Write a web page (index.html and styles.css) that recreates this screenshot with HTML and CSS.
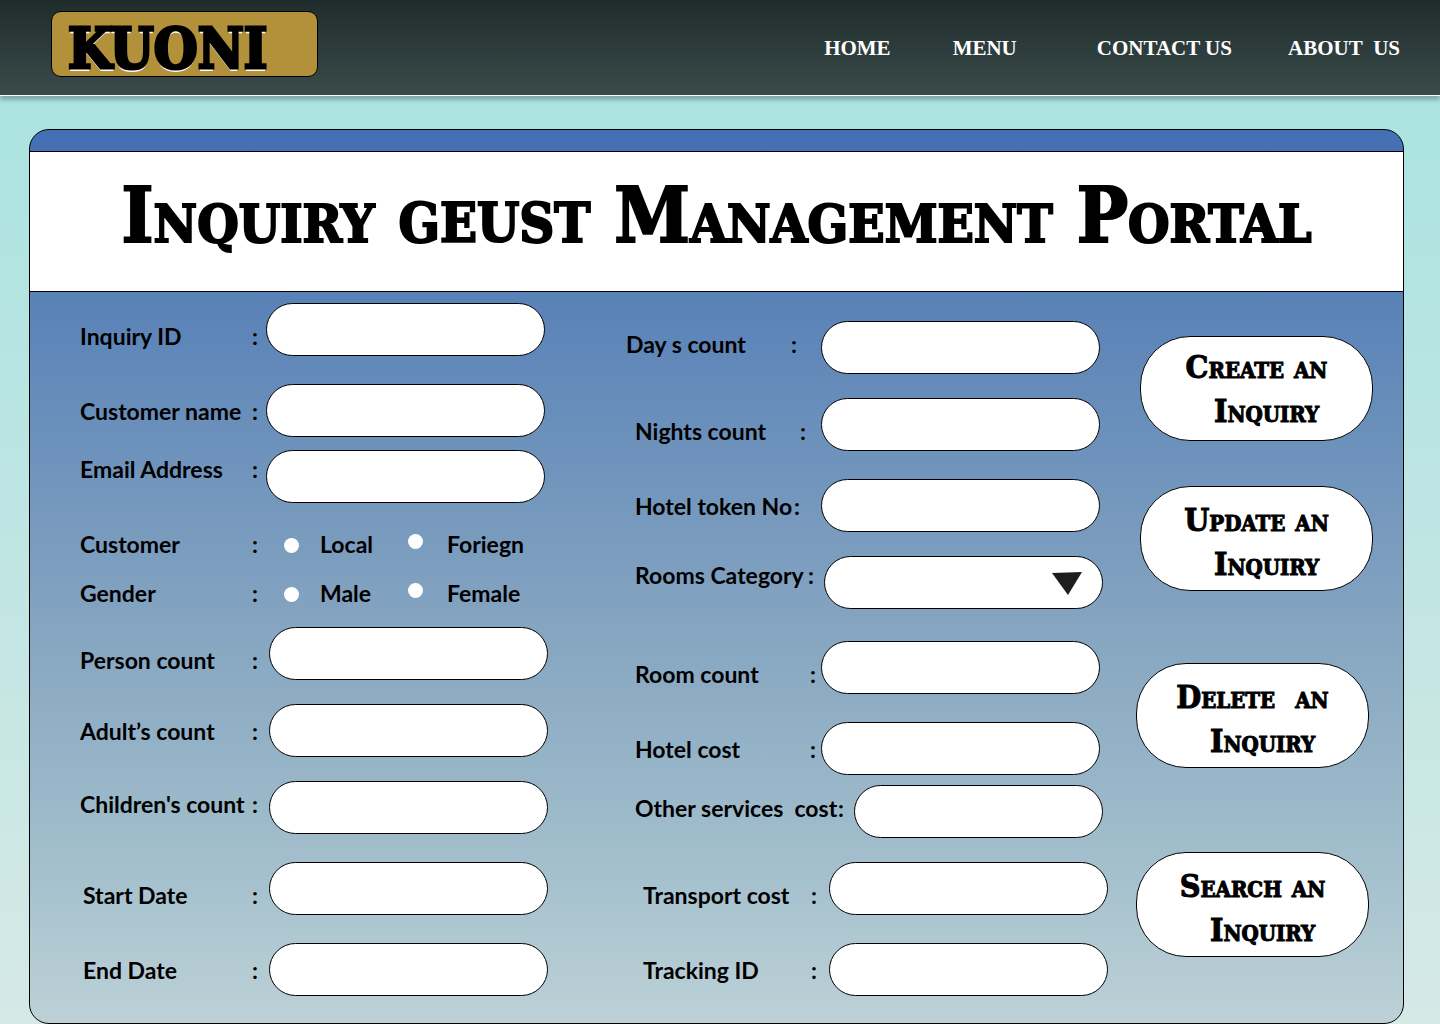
FILE: index.html
```html
<!DOCTYPE html>
<html lang="en">
<head>
<meta charset="utf-8">
<meta name="viewport" content="width=device-width, initial-scale=1">
<title>Kuoni - Inquiry Guest Management Portal</title>
<link rel="stylesheet" href="styles.css">
</head>
<body>
<header class="site-header">
  <a class="brand" href="#">KUONI</a>
  <nav class="nav">
    <a href="#">HOME</a>
    <a href="#" class="nav-menu">MENU</a>
    <a href="#" class="nav-contact">CONTACT US</a>
    <a href="#" class="nav-about">ABOUT&nbsp; US</a>
  </nav>
</header>
<main class="panel">
  <div class="title-band">
    <h1>Inquiry <span class="caps">GEUST</span> Management Portal</h1>
  </div>
  <form class="form">
    <div class="column first">
      <div class="row"><label class="low" for="inquiry-id">Inquiry ID<span>:</span></label><input class="field" id="inquiry-id" type="text"></div>
      <div class="row space-l"><label for="customer-name">Customer name<span>:</span></label><input class="field" id="customer-name" type="text"></div>
      <div class="row space-s"><label class="high" for="email">Email Address<span>:</span></label><input class="field" id="email" type="email"></div>
      <div class="choices" role="radiogroup" aria-labelledby="customer-type">
        <div class="name" id="customer-type">Customer<span>:</span></div>
        <label class="choice"><input type="radio" name="type">Local</label>
        <label class="choice raised"><input type="radio" name="type">Foriegn</label>
      </div>
      <div class="choices" role="radiogroup" aria-labelledby="gender">
        <div class="name" id="gender">Gender<span>:</span></div>
        <label class="choice"><input type="radio" name="gender">Male</label>
        <label class="choice raised"><input type="radio" name="gender">Female</label>
      </div>
      <div class="row wide space-xs"><label class="low" for="persons">Person count<span>:</span></label><input class="field" id="persons" type="text"></div>
      <div class="row wide space-m"><label for="adults">Adult’s count<span>:</span></label><input class="field" id="adults" type="text"></div>
      <div class="row wide space-m"><label class="upper" for="children">Children's count<span>:</span></label><input class="field" id="children" type="text"></div>
      <div class="row wide dates space-l"><label class="low" for="start">Start Date<span>:</span></label><input class="field" id="start" type="text"></div>
      <div class="row wide dates space-l"><label for="end">End Date<span>:</span></label><input class="field" id="end" type="text"></div>
    </div>
    <div class="column second">
      <div class="row outdent"><label class="upper" for="days">Day s count<span>:</span></label><input class="field" id="days" type="text"></div>
      <div class="row space-m"><label class="low" for="nights">Nights count<span>:</span></label><input class="field" id="nights" type="text"></div>
      <div class="row token space-l"><label for="token">Hotel token No<span>:</span></label><input class="field" id="token" type="text"></div>
      <div class="row category space-m"><label class="high" for="category">Rooms Category<span>:</span></label>
        <div class="select field">
          <select id="category"><option></option></select>
          <svg viewBox="0 0 30 23" width="30" height="23" aria-hidden="true"><path d="M0 1L30 0L16 23Z" fill="#1e1e1e"/></svg>
        </div>
      </div>
      <div class="row full space-xl"><label class="low" for="rooms">Room count<span>:</span></label><input class="field" id="rooms" type="text"></div>
      <div class="row full space-l"><label for="hotel-cost">Hotel cost<span>:</span></label><input class="field" id="hotel-cost" type="text"></div>
      <div class="row services space-xs"><label class="upper" for="services">Other services&nbsp; cost<span>:</span></label><input class="field" id="services" type="text"></div>
      <div class="row indent space-m"><label class="low" for="transport">Transport cost<span>:</span></label><input class="field" id="transport" type="text"></div>
      <div class="row indent space-l"><label for="tracking">Tracking ID<span>:</span></label><input class="field" id="tracking" type="text"></div>
    </div>
    <div class="actions">
      <div class="pair top">
        <button type="button">Create an
  Inquiry</button>
        <button type="button" class="drop">Update an
  Inquiry</button>
      </div>
      <div class="pair bottom">
        <button type="button" class="drop">Delete  an
  Inquiry</button>
        <button type="button" class="drop">Search an
  Inquiry</button>
      </div>
    </div>
  </form>
</main>
</body>
</html>
```
FILE: styles.css
```css
* {
  box-sizing: border-box;
}

body {
  margin: 0;
  min-height: 100vh;
  color: #000;
  font-family: Lato, sans-serif;
  background: linear-gradient(#a9e2e0, #abe3e1 10%, #c5e6e4 65%, #d5e9e7);
}

.site-header {
  display: flex;
  align-items: center;
  justify-content: space-between;
  height: 96px;
  padding: 0 40px 8px 51px;
  border-bottom: 1px solid #fff;
  background: linear-gradient(#1f2c2c, #3a4b4a);
  box-shadow: 0 4px 4px rgba(0, 0, 0, 0.25);
}

.brand {
  width: 267px;
  height: 66px;
  padding-left: 16px;
  border: 1px solid #000;
  border-radius: 10px;
  background: #b2913a;
  color: #000;
  font: bold 56px/72px "DejaVu Serif Condensed", "DejaVu Serif", serif;
  -webkit-text-stroke: 3px #000;
  text-decoration: none;
  text-shadow: 0 3px 0 #fff;
}

.nav {
  display: flex;
  padding-top: 8px;
}

.nav a {
  color: #fff;
  font: bold 21px/32px "Liberation Serif", serif;
  text-decoration: none;
}

.nav-menu {
  margin-left: 62px;
}

.nav-contact {
  margin-left: 80px;
}

.nav-about {
  margin-left: 56px;
}

.panel {
  margin: 33px 36px 0 29px;
  border: 1px solid #000;
  border-radius: 20px;
  background: linear-gradient(#436fb4, #5881b7 18%, #84a4c0 55%, #a4c0cd 83%, #bdd1d7);
}

.title-band {
  margin-top: 21px;
  padding-bottom: 11px;
  border: solid #000;
  border-width: 1px 0;
  background: #fff;
}

h1 {
  margin: 0;
  font: bold 76px/128px "DejaVu Serif Condensed", "DejaVu Serif", serif;
  font-variant: small-caps;
  -webkit-text-stroke: 2px #000;
  text-align: center;
  white-space: nowrap;
}

.caps {
  font-size: 54px;
  line-height: 0;
}

.form {
  display: grid;
  grid-template-columns: minmax(0, 546fr) minmax(0, 510fr) minmax(0, 237fr);
  padding: 11px 30px 27px 50px;
}

.column {
  display: flex;
  flex-direction: column;
}

.first {
  padding-right: 78px;
}

.second {
  padding: 18px 28px 0 9px;
}

.row,
.choices {
  display: flex;
  align-items: center;
  font-size: 23px;
  font-weight: 700;
  line-height: 32px;
  white-space: nowrap;
}

.row > label,
.name {
  display: flex;
  justify-content: space-between;
  flex: none;
  width: 178px;
}

.field {
  flex: 1;
  min-width: 0;
  height: 53px;
  padding: 0 24px;
  border: 1px solid #000;
  border-radius: 27px;
  background: #fff;
  font: inherit;
}

.low {
  padding-top: 12px;
}

.upper {
  padding-bottom: 8px;
}

.high {
  padding-bottom: 16px;
}

.space-xs {
  margin-top: 10px;
}

.space-s {
  margin-top: 13px;
}

.space-m {
  margin-top: 24px;
}

.space-l {
  margin-top: 28px;
}

.space-xl {
  margin-top: 32px;
}

.first .row {
  gap: 8px;
  padding-right: 3px;
}

.first .wide {
  gap: 11px;
  padding-right: 0;
}

.first .dates {
  padding-left: 3px;
}

.first .dates > label {
  width: 175px;
}

.row + .choices {
  margin-top: 16px;
}

.choices {
  height: 49px;
}

.choice {
  display: flex;
  align-items: center;
  gap: 21px;
  width: 124px;
  margin-left: 26px;
}

.choice + .choice {
  width: auto;
  gap: 24px;
  margin-left: 0;
}

input[type="radio"] {
  appearance: none;
  width: 15px;
  height: 15px;
  margin: 4px 0 0;
  border-radius: 50%;
  background: #fff;
}

.raised input[type="radio"] {
  margin: 0 0 4px;
}

.second .row {
  gap: 15px;
  padding-right: 8px;
}

.second .row > label {
  width: 171px;
}

.second .outdent {
  gap: 24px;
  margin-left: -9px;
}

.second .token {
  gap: 21px;
}

.second .token > label {
  width: 165px;
}

.second .category,
.second .services {
  gap: 10px;
  padding-right: 5px;
}

.second .category > label {
  width: 179px;
}

.second .full {
  gap: 5px;
}

.second .full > label {
  width: 181px;
}

.second .services > label {
  width: 209px;
}

.second .indent {
  gap: 12px;
  padding: 0 0 0 8px;
}

.second .indent > label {
  width: 174px;
}

.select {
  position: relative;
  padding: 0;
}

.select select {
  appearance: none;
  width: 100%;
  height: 51px;
  padding: 0 60px 0 24px;
  border: 0;
  border-radius: 26px;
  background: transparent;
  font: inherit;
}

.select svg {
  position: absolute;
  top: 15px;
  right: 20px;
  pointer-events: none;
}

.actions {
  padding-top: 33px;
}

.pair {
  display: grid;
  gap: 45px;
}

.top {
  padding-left: 4px;
}

.bottom {
  gap: 84px;
  margin-top: 72px;
  padding-right: 4px;
}

button {
  height: 105px;
  padding: 0;
  border: 1px solid #000;
  border-radius: 50px;
  background: #fff;
  color: #000;
  font: bold 32px/44px "DejaVu Serif Condensed", "DejaVu Serif", serif;
  font-variant: small-caps;
  -webkit-text-stroke: 1px #000;
  white-space: pre;
}

.drop {
  padding-top: 6px;
}
```
